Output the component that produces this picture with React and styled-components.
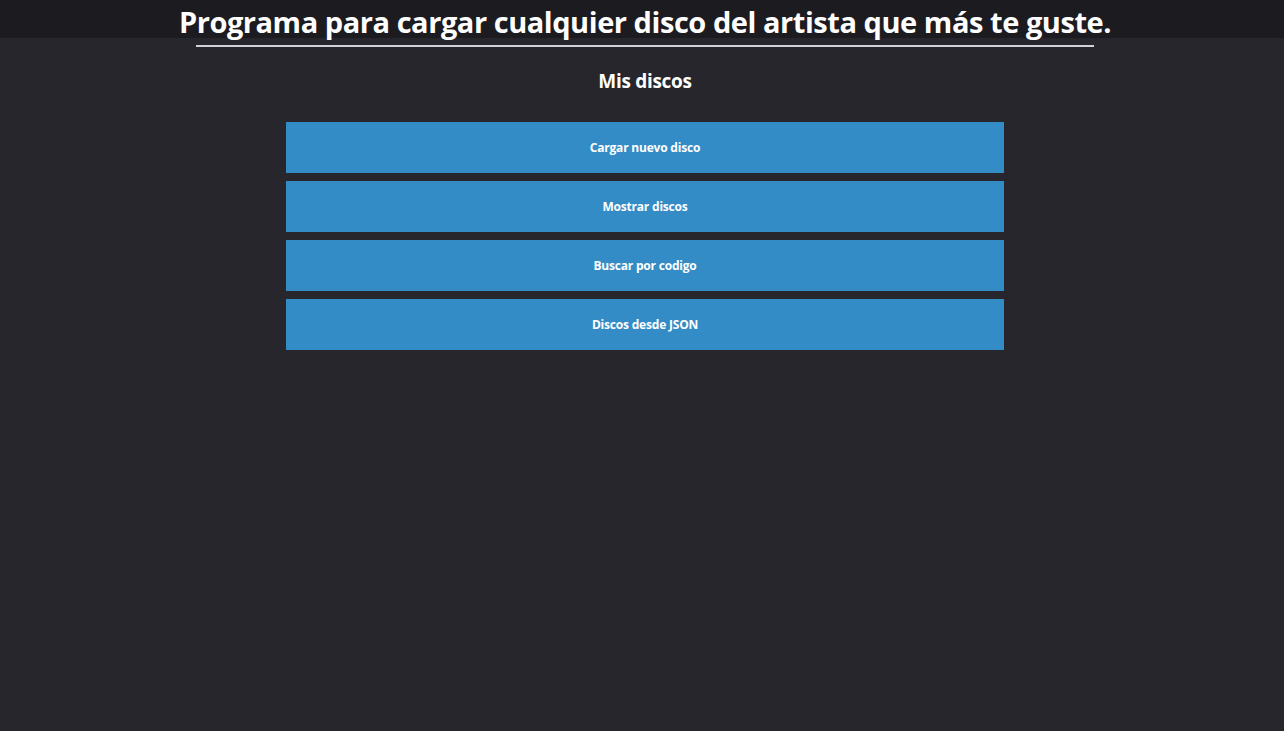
import React from "react";
import styled, { createGlobalStyle } from "styled-components";

const GlobalStyle = createGlobalStyle`
  html, body {
    margin: 0;
    padding: 0;
    background-color: #27262c;
    font-family: "Open Sans", "Noto Sans", sans-serif;
    color: #ffffff;
  }
`;

const Page = styled.div`
  min-height: 731px;
  background-color: #27262c;
`;

const Header = styled.header`
  height: 38px;
  background-color: #1c1b20;
  display: flex;
  justify-content: center;
  padding-left: 6px;
`;

const Title = styled.h1`
  margin: 0;
  font-size: 29px;
  font-weight: 700;
  line-height: 44px;
  letter-spacing: -0.45px;
  white-space: nowrap;
`;

const Divider = styled.hr`
  width: 898px;
  margin: 7px auto 0;
  border: none;
  border-top: 2px solid #d2d2d4;
  position: relative;
  left: 3px;
`;

const Main = styled.main`
  display: flex;
  flex-direction: column;
  align-items: center;
  padding-left: 6px;
`;

const SubTitle = styled.h2`
  margin: 20px 0 0;
  font-size: 19px;
  font-weight: 700;
  line-height: 28px;
  letter-spacing: -0.3px;
`;

const Menu = styled.nav`
  display: flex;
  flex-direction: column;
  gap: 8px;
  width: 718px;
  margin-top: 27px;
`;

const MenuButton = styled.button`
  height: 51px;
  border: none;
  background-color: #348cc6;
  color: #ffffff;
  font-family: "Open Sans", "Noto Sans", sans-serif;
  font-size: 12px;
  font-weight: 700;
  letter-spacing: -0.2px;
  cursor: pointer;

  &:hover {
    background-color: #2f7fb4;
  }
`;

const options = [
  "Cargar nuevo disco",
  "Mostrar discos",
  "Buscar por codigo",
  "Discos desde JSON",
];

const App = () => {
  return (
    <Page>
      <GlobalStyle />
      <Header>
        <Title>Programa para cargar cualquier disco del artista que más te guste.</Title>
      </Header>
      <Divider />
      <Main>
        <SubTitle>Mis discos</SubTitle>
        <Menu>
          {options.map((label) => (
            <MenuButton key={label}>{label}</MenuButton>
          ))}
        </Menu>
      </Main>
    </Page>
  );
};

export default App;
